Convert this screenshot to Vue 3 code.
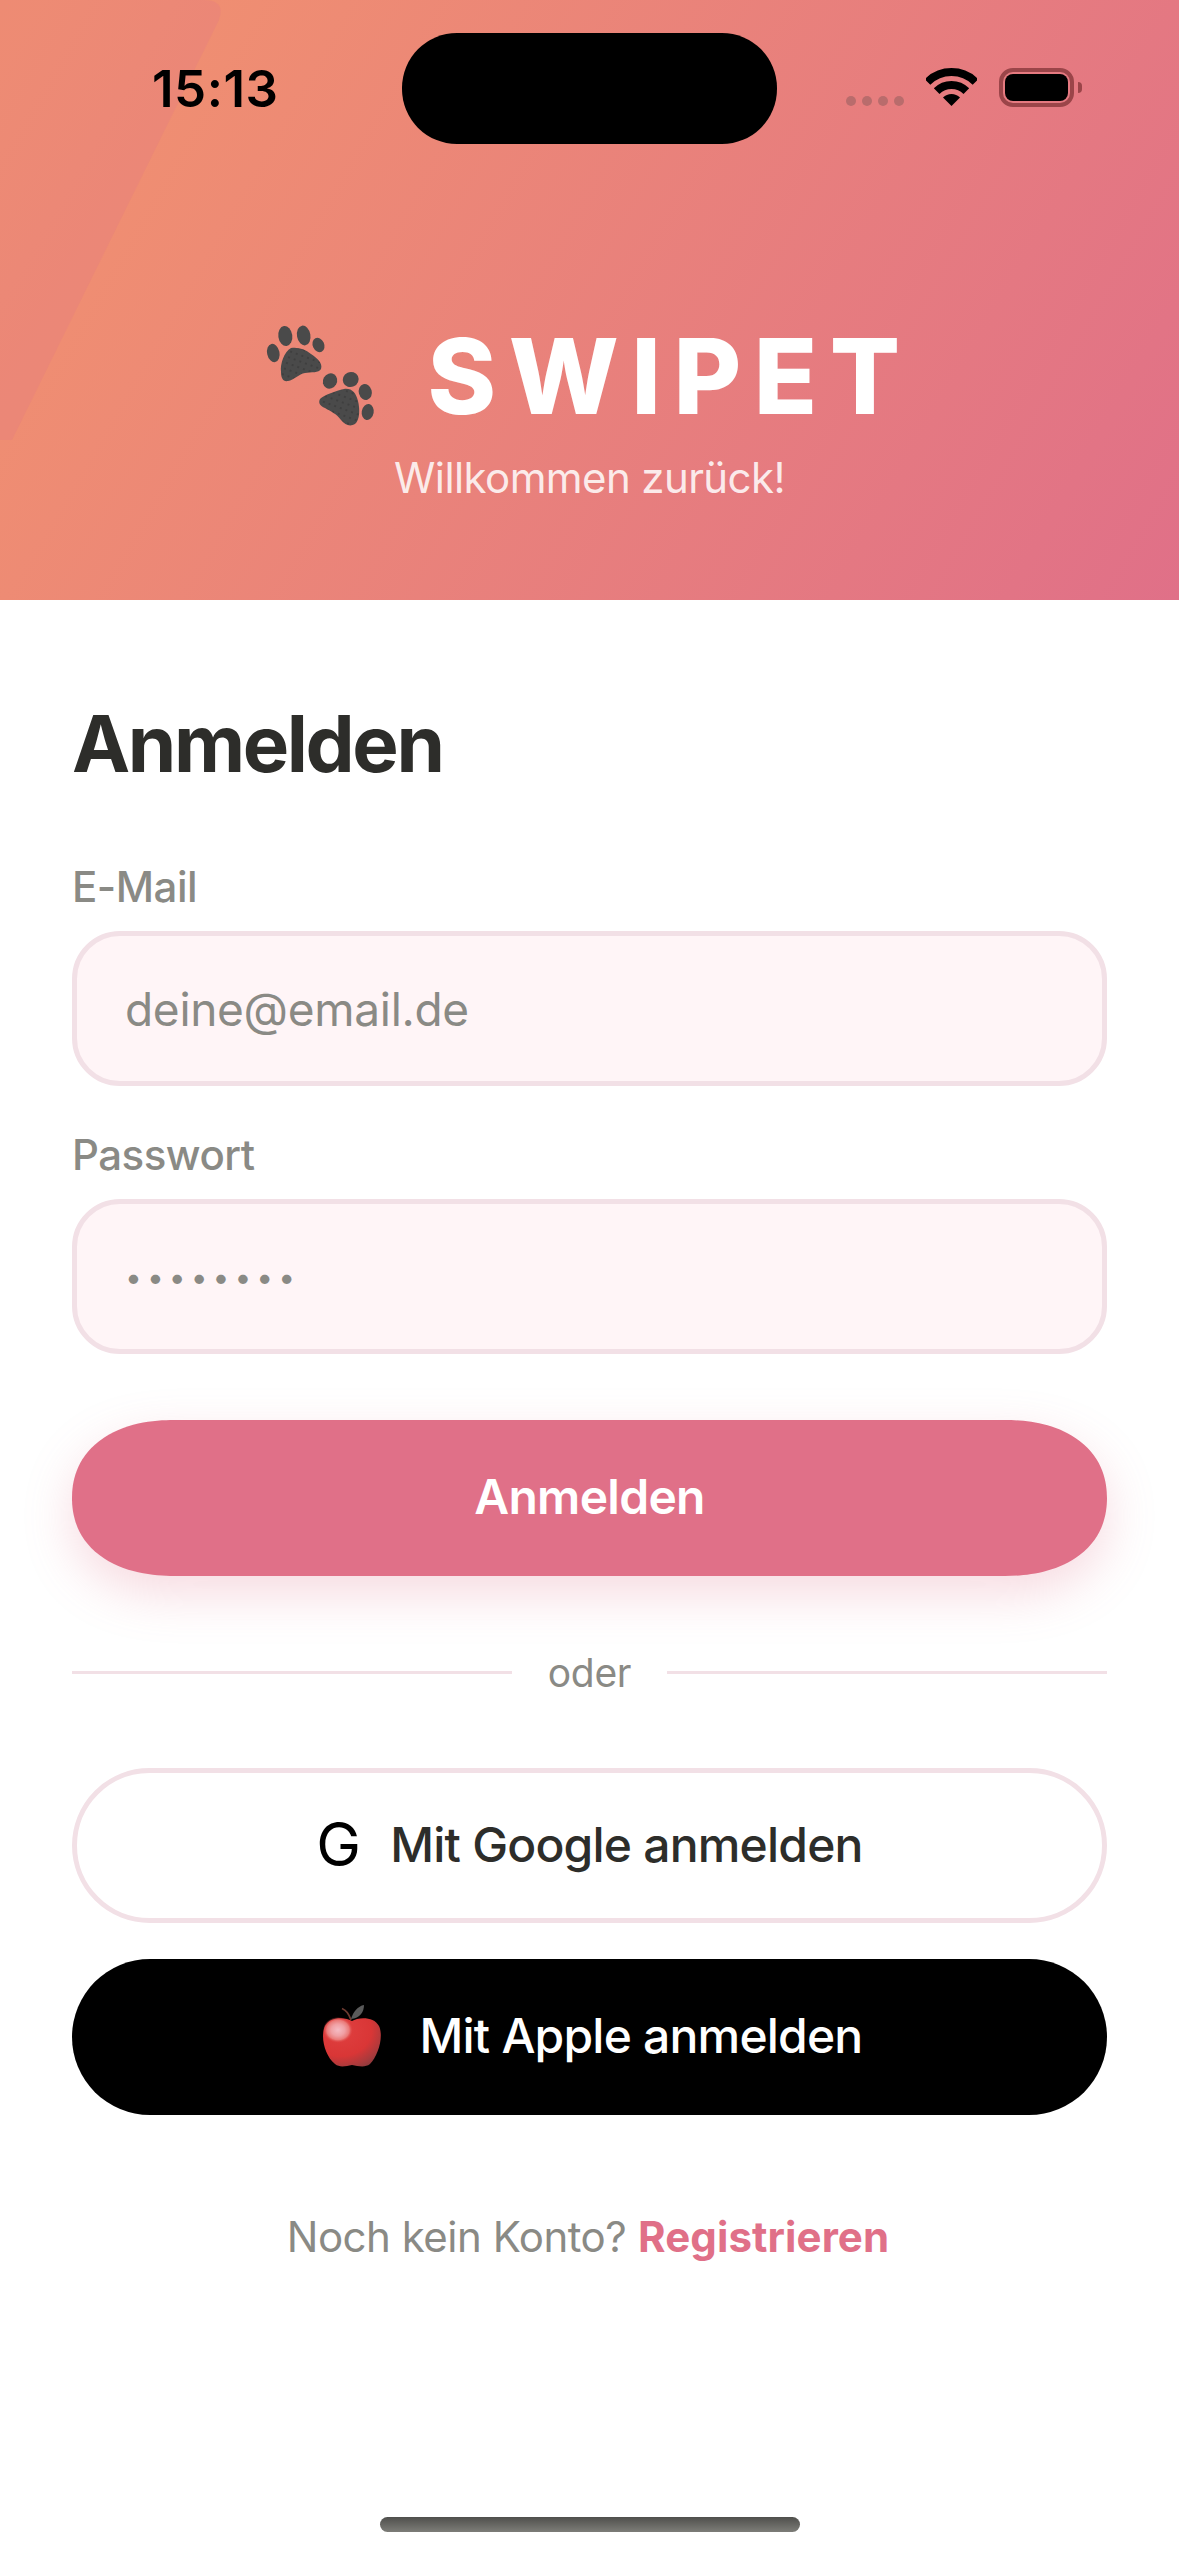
<template>
  <div class="page">
    <header class="hero">
      <!-- helle Form oben links im Verlauf -->
      <svg class="hero-shape" width="224" height="440" viewBox="0 0 224 440">
        <path d="M0 0H204Q226 0 219 20L12 440H0Z" fill="#e07088" fill-opacity="0.22" />
      </svg>

      <div class="status-bar">
        <span class="time">15:13</span>
        <div class="island"></div>
        <div class="status-icons">
          <div class="signal"><i></i><i></i><i></i><i></i></div>
          <svg class="wifi" width="51" height="38" viewBox="0 0 51 38">
            <path d="M1.5 14A34 34 0 0 1 49.5 14" fill="none" stroke="#000" stroke-width="8" />
            <path d="M10.65 23.15A21 21 0 0 1 40.35 23.15" fill="none" stroke="#000" stroke-width="8" />
            <path d="M25.5 38L17 29.5A12 12 0 0 1 34 29.5Z" fill="#000" />
          </svg>
          <div class="battery"><div class="battery-level"></div></div>
        </div>
      </div>

      <div class="brand">
        <svg class="paws" width="130" height="130" viewBox="0 0 130 130">
          <defs>
            <pattern id="pawDots" width="6" height="6" patternUnits="userSpaceOnUse" patternTransform="rotate(20)">
              <rect width="6" height="6" fill="#4a4a4a" />
              <circle cx="3" cy="3" r="0.7" fill="#2b2b2b" />
            </pattern>
          </defs>
          <g fill="#4a4a4a">
            <ellipse cx="27.3" cy="25" rx="7" ry="10" transform="rotate(-8 27.3 25)" />
            <ellipse cx="45.7" cy="24.5" rx="6.7" ry="10" transform="rotate(-10 45.7 24.5)" />
            <ellipse cx="60.5" cy="34" rx="5.7" ry="7.5" transform="rotate(-25 60.5 34)" />
            <ellipse cx="15.3" cy="42" rx="6.2" ry="9.3" transform="rotate(-12 15.3 42)" />
            <ellipse cx="72" cy="70" rx="7" ry="7.8" transform="rotate(30 72 70)" />
            <ellipse cx="92.7" cy="68.5" rx="8" ry="7.5" transform="rotate(-25 92.7 68.5)" />
            <ellipse cx="107.3" cy="81" rx="6.5" ry="8" transform="rotate(-15 107.3 81)" />
            <ellipse cx="109.7" cy="101" rx="6" ry="8" transform="rotate(10 109.7 101)" />
          </g>
          <path d="M33 37C40 36 47 38 53 43C59 47 65 52 63 58C61 62 53 61 47 62C41 63 36 69 30 70C25 71 23 67 23 61C22 53 26 41 33 37Z" fill="url(#pawDots)" />
          <path d="M62 88C66 84 78 80 86 78C94 77 98 82 100 90C102 98 102 109 97 113C92 116 87 114 83 109C79 103 72 100 67 97C62 95 60 92 62 88Z" fill="url(#pawDots)" />
        </svg>
        <h1 class="logo">SWIPET</h1>
      </div>
      <p class="welcome">Willkommen zurück!</p>
    </header>

    <main class="form">
      <h2 class="title">Anmelden</h2>

      <label class="field">
        <span class="field-label">E-Mail</span>
        <input class="field-input" type="email" placeholder="deine@email.de" />
      </label>
      <label class="field">
        <span class="field-label">Passwort</span>
        <input class="field-input field-password" type="password" v-model="password" />
      </label>

      <button class="btn btn-primary">Anmelden</button>

      <div class="divider"><span>oder</span></div>

      <button class="btn btn-google">
        <span class="g-mark">G</span>
        Mit Google anmelden
      </button>
      <button class="btn btn-apple">
        <svg class="apple" width="60" height="64" viewBox="0 0 60 64">
          <defs>
            <radialGradient id="appleSkin" cx="0.3" cy="0.25" r="0.9">
              <stop offset="0" stop-color="#e04040" />
              <stop offset="0.6" stop-color="#d93636" />
              <stop offset="0.85" stop-color="#a93a3c" />
              <stop offset="1" stop-color="#873a3d" />
            </radialGradient>
            <radialGradient id="appleShine">
              <stop offset="0" stop-color="#f5bcc4" />
              <stop offset="0.45" stop-color="#f0a0a4" />
              <stop offset="0.75" stop-color="#ea7a78" />
              <stop offset="1" stop-color="#e04040" stop-opacity="0" />
            </radialGradient>
          </defs>
          <path d="M29 16C27 10 24 6 20 4.5" fill="none" stroke="#6d3a30" stroke-width="1.8" />
          <path d="M29 15C31 8 36 2 42 1C42 8 38 14 29 15Z" fill="#5a5a5a" />
          <path d="M30 17C24 13 8 12 3 22C-2 33 3 52 13 60C18 64 24 62 30 61C36 62 43 64 48 60C56 52 62 33 57 22C52 12 36 13 30 17Z" fill="url(#appleSkin)" />
          <ellipse cx="16" cy="26" rx="15" ry="13" fill="url(#appleShine)" />
        </svg>
        Mit Apple anmelden
      </button>

      <p class="signup"><span class="signup-text">Noch kein Konto?</span> <a class="signup-link" href="#">Registrieren</a></p>
    </main>

    <div class="home-indicator"></div>
  </div>
</template>

<script setup>
import { ref } from 'vue';

const password = ref('12345678');
</script>

<style scoped>
.page {
  position: relative;
  width: 1179px;
  height: 2556px;
  overflow: hidden;
  background: #fff;
  font-family: Inter, "Noto Sans", sans-serif;
  color: #2d2d2a;
}

/* --- Kopfbereich --- */
.hero {
  position: relative;
  height: 600px;
  box-sizing: border-box;
  padding-top: 33px;
  background: linear-gradient(120deg, #f2936e, #e07088);
  text-align: center;
}

.hero-shape {
  position: absolute;
  top: 0;
  left: 0;
}

.status-bar {
  position: relative;
  display: grid;
  grid-template-columns: 402px 375px 402px;
  height: 111px;
}

.time {
  justify-self: start;
  margin: 25px 0 0 152px;
  font-size: 51px;
  line-height: 62px;
  font-weight: 600;
  letter-spacing: 0.5px;
  color: #000;
}

.island {
  background: #000;
  border-radius: 55px;
}

.status-icons {
  display: flex;
  align-items: flex-start;
  padding: 35px 0 0 69px;
}

.signal {
  display: flex;
  gap: 6px;
  margin-top: 28px;
}

.signal i {
  width: 10px;
  height: 10px;
  border-radius: 50%;
  background: #b96c6c;
}

.wifi {
  margin-left: 22px;
}

.battery {
  position: relative;
  box-sizing: border-box;
  width: 75px;
  height: 39px;
  margin-left: 22px;
  padding: 2px;
  border: 4px solid #9b4549;
  border-radius: 14px;
}

.battery::after {
  content: "";
  position: absolute;
  top: 10px;
  right: -12px;
  width: 4px;
  height: 11px;
  background: #9b4549;
  border-radius: 0 6px 6px 0;
}

.battery-level {
  height: 100%;
  background: #000;
  border-radius: 8px;
}

.brand {
  position: relative;
  display: flex;
  justify-content: center;
  align-items: center;
  gap: 39px;
  margin-top: 167px;
  padding-right: 8px;
}

.logo {
  margin: 0;
  font-size: 104px;
  line-height: 130px;
  font-weight: 800;
  letter-spacing: 12.5px;
  color: #fff;
}

.welcome {
  position: relative;
  margin: 11px 0 0;
  font-size: 42px;
  line-height: 51px;
  letter-spacing: -0.6px;
  color: rgba(255, 255, 255, 0.85);
}

/* --- Formular --- */
.form {
  display: flex;
  flex-direction: column;
  padding: 94px 72px 0;
}

.title {
  margin: 0 0 67px;
  font-size: 78px;
  line-height: 100px;
  font-weight: 700;
  letter-spacing: -2.4px;
}

.field {
  display: flex;
  flex-direction: column;
  gap: 19px;
  margin-bottom: 43px;
}

.field-label {
  font-size: 42px;
  line-height: 51px;
  font-weight: 500;
  letter-spacing: -0.5px;
  color: #8a8a85;
}

.field-input {
  box-sizing: border-box;
  width: 100%;
  height: 155px;
  padding: 0 48px;
  background: #fff5f7;
  border: 5px solid #f2e0e6;
  border-radius: 48px;
  outline: none;
  font-family: inherit;
  font-size: 46px;
  letter-spacing: -0.3px;
  color: #8a8a85;
}

.field-input::placeholder {
  color: #8a8a85;
  opacity: 1;
}

.field-password {
  font-size: 30px;
  letter-spacing: 5px;
}

.btn {
  display: flex;
  justify-content: center;
  align-items: center;
  width: 100%;
  height: 155px;
  box-sizing: border-box;
  padding: 0 0 3px;
  border: none;
  border-radius: 78px;
  font-family: inherit;
  font-size: 48px;
  font-weight: 450;
  letter-spacing: -0.8px;
}

.btn-primary {
  height: 156px;
  margin-top: 23px;
  background: #e07088;
  color: #fff;
  font-weight: 600;
  letter-spacing: -0.7px;
  border-radius: 102px / 78px;
  corner-shape: superellipse(1.15);
  box-shadow: 0 18px 48px rgba(224, 112, 136, 0.25);
}

.divider {
  display: flex;
  align-items: center;
  gap: 36px;
  margin: 71px 0 70px;
  font-size: 39px;
  line-height: 51px;
  letter-spacing: -0.3px;
  color: #8a8a85;
}

.divider::before,
.divider::after {
  content: "";
  flex: 1;
  height: 3px;
  background: #f2e0e6;
}

.btn-google {
  gap: 30px;
  background: #fff;
  border: 5px solid #f2e0e6;
  color: #2d2d2a;
}

.g-mark {
  font-size: 60px;
  line-height: 60px;
  font-weight: 400;
  color: #000;
}

.btn-apple {
  gap: 38px;
  height: 156px;
  margin-top: 36px;
  padding-left: 5px;
  background: #000;
  color: #fff;
}

.signup {
  margin: 95px 0 0;
  padding-right: 3px;
  text-align: center;
  font-size: 42px;
  line-height: 54px;
  color: #8a8a85;
}

.signup-text {
  letter-spacing: -0.5px;
}

.signup-link {
  font-weight: 700;
  letter-spacing: 0.1px;
  color: #e07088;
  text-decoration: none;
}

.home-indicator {
  position: absolute;
  left: 380px;
  bottom: 24px;
  width: 420px;
  height: 15px;
  border-radius: 8px;
  background: linear-gradient(#4f4f4c, #7d7d78);
}
</style>
